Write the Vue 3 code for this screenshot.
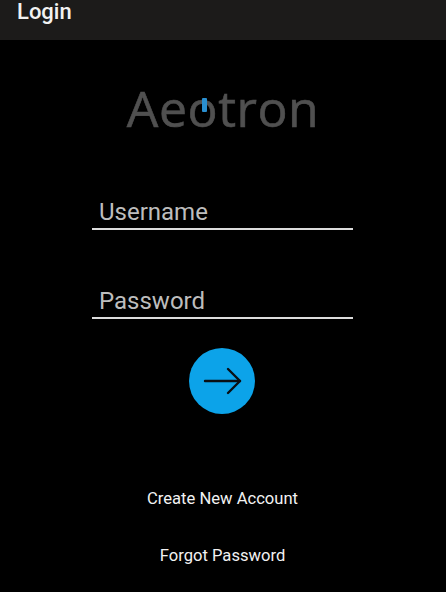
<script setup>
const fields = ['Username', 'Password']
const links = ['Create New Account', 'Forgot Password']
</script>

<template>
  <div class="screen">
    <header class="bar"><span class="title">Login</span></header>
    <main class="content">
      <div class="logo">
        <span class="logo-text">Aeotron</span>
        <span class="logo-mark"></span>
      </div>
      <div class="fields">
        <div v-for="f in fields" :key="f" class="field">{{ f }}</div>
      </div>
      <button class="go" type="button" aria-label="Log in">
        <svg width="40" height="30" viewBox="0 0 40 30" fill="none" stroke="#0a0f14" stroke-width="2.4" stroke-linecap="round" stroke-linejoin="round">
          <path d="M3 15H38" />
          <path d="M26 3L38 15L26 27" />
        </svg>
      </button>
      <nav class="links">
        <a v-for="l in links" :key="l" class="link">{{ l }}</a>
      </nav>
    </main>
  </div>
</template>

<style scoped>
.screen {
  width: 446px;
  height: 592px;
  background: #000;
  overflow: hidden;
  font-family: Roboto, "Liberation Sans", sans-serif;
  display: flex;
  flex-direction: column;
}
.bar {
  height: 40px;
  flex: none;
  background: #1c1b1a;
  padding-left: 17px;
  box-sizing: border-box;
}
.title {
  display: block;
  color: #f2f2f2;
  font-size: 22px;
  font-weight: 500;
  line-height: 24px;
}
.content {
  display: flex;
  flex-direction: column;
  align-items: center;
}
.logo {
  position: relative;
  margin-top: 40px;
  height: 60px;
  width: 192px;
  display: flex;
  justify-content: center;
}
.logo-text {
  font-family: "Open Sans", sans-serif;
  font-weight: 500;
  font-size: 50px;
  line-height: 57px;
  color: #505050;
  letter-spacing: 0.5px;
  -webkit-text-stroke: 0.6px #505050;
}
.logo-mark {
  position: absolute;
  left: 75px;
  top: 18px;
  width: 5px;
  height: 14px;
  background: #2a8fd0;
  border-radius: 1px;
}
.fields {
  margin-top: 56px;
  margin-right: 1px;
  width: 261px;
  display: flex;
  flex-direction: column;
  gap: 55px;
}
.field {
  height: 34px;
  box-sizing: border-box;
  border-bottom: 2px solid #dcdcdc;
  padding-left: 7px;
  color: #bdbdbd;
  font-size: 24px;
  line-height: 32px;
}
.go {
  margin-top: 29px;
  margin-right: 2px;
  width: 66px;
  height: 66px;
  border: 0;
  border-radius: 50%;
  background: #0ca3e9;
  padding: 0;
  display: flex;
  align-items: center;
  justify-content: center;
}
.links {
  margin-top: 75px;
  margin-right: 1px;
  display: flex;
  flex-direction: column;
  align-items: center;
  gap: 37px;
}
.link {
  color: #f2f2f2;
  font-size: 16.6px;
  line-height: 20px;
}
</style>
